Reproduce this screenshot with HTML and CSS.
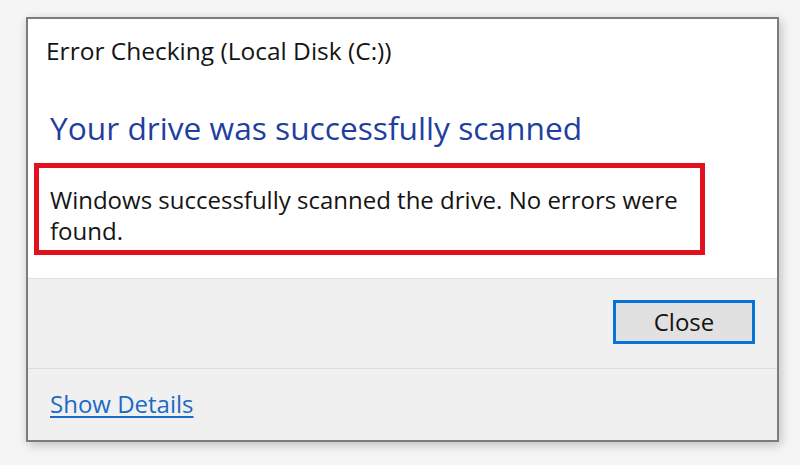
FILE: index.html
```html
<!DOCTYPE html>
<html>
<head>
<meta charset="utf-8">
<link rel="stylesheet" href="styles.css">
</head>
<body>
<div class="dialog">
  <div class="content">
    <div class="title">Error Checking (Local Disk (C:))</div>
    <div class="heading">Your drive was successfully scanned</div>
    <div class="highlight">
      <p class="message">Windows successfully scanned the drive. No errors were found.</p>
    </div>
  </div>
  <div class="buttons">
    <button class="btn">Close</button>
  </div>
  <div class="footer">
    <a class="link" href="#">Show Details</a>
  </div>
</div>
</body>
</html>
```

FILE: styles.css
```css
html, body {
  margin: 0;
  padding: 0;
}
body {
  width: 800px;
  height: 465px;
  background: #f5f5f5;
  font-family: "Open Sans", "Noto Sans", sans-serif;
  overflow: hidden;
}
.dialog {
  box-sizing: border-box;
  margin: 17px 0 0 26px;
  width: 753px;
  height: 425px;
  border: 2px solid #7c7c7c;
  background: #f0f0f0;
  box-shadow: 2px 3px 10px rgba(0, 0, 0, 0.22);
  display: flex;
  flex-direction: column;
}
.content {
  box-sizing: border-box;
  height: 259px;
  background: #ffffff;
  padding: 14.5px 0 0 6px;
}
.title {
  margin-left: 12px;
  font-size: 24.5px;
  line-height: 34px;
  color: #141414;
  white-space: nowrap;
}
.heading {
  margin-top: 38.2px;
  margin-left: 16px;
  font-size: 31.7px;
  line-height: 44px;
  color: #1f3f9f;
  white-space: nowrap;
}
.highlight {
  box-sizing: border-box;
  margin-top: 13.3px;
  width: 671px;
  height: 92px;
  border: 5px solid #e3101f;
  padding: 16.2px 0 0 11px;
}
.message {
  margin: 0;
  font-size: 24px;
  line-height: 31px;
  color: #141414;
}
.buttons {
  box-sizing: border-box;
  height: 90px;
  border-top: 1px solid #e0e0e0;
  display: flex;
  justify-content: flex-end;
  align-items: flex-start;
  padding: 21px 22px 0 0;
}
.btn {
  box-sizing: border-box;
  width: 142px;
  height: 44px;
  background: #e1e1e1;
  border: 3px solid #0a72d6;
  font-family: "Open Sans", "Noto Sans", sans-serif;
  font-size: 24px;
  line-height: 36px;
  color: #141414;
  padding: 0;
}
.footer {
  flex: 1;
  border-top: 1px solid #dcdcdc;
  padding: 19.7px 0 0 22px;
}
.link {
  font-size: 24px;
  line-height: 30px;
  color: #1b6ac6;
  text-decoration: underline;
  text-decoration-thickness: 2px;
  text-underline-offset: 3px;
}
```
